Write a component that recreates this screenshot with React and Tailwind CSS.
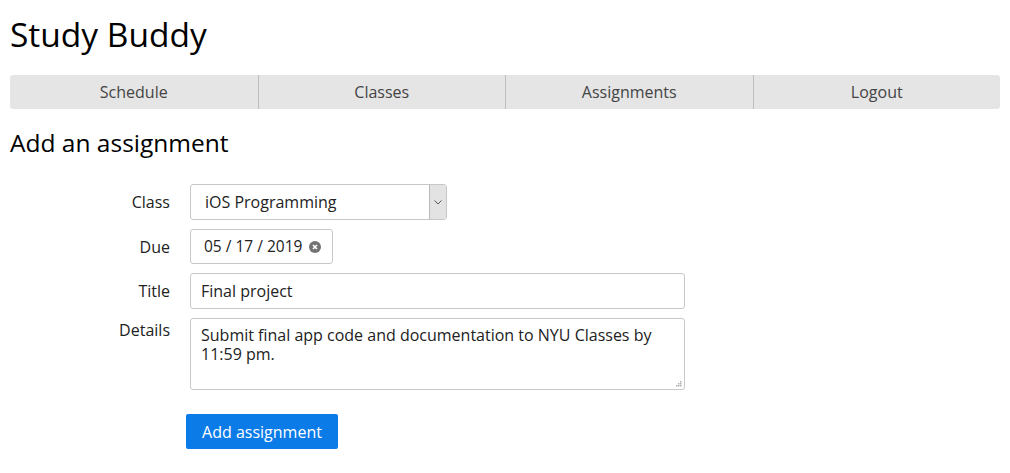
import { useState } from 'react'

const FONT = { fontFamily: '"Open Sans", Lato, "Liberation Sans", sans-serif' }

const NAV = ['Schedule', 'Classes', 'Assignments', 'Logout']

function Row({ label, children, top }) {
  return (
    <div className="flex">
      <div className={`w-[180px] pr-[20px] flex justify-end text-[16px] text-[#222] ${top ? 'items-start' : 'items-center'}`}>
        {label}
      </div>
      {children}
    </div>
  )
}

export default function App() {
  const [title, setTitle] = useState('Final project')
  const [details, setDetails] = useState('Submit final app code and documentation to NYU Classes by 11:59 pm.')

  return (
    <div className="bg-white min-h-[473px] px-[10px] pt-[14px]" style={FONT}>
      <h1 className="text-[33.5px] leading-[40px] text-black">Study Buddy</h1>

      <nav className="mt-[21px] grid grid-cols-4 rounded-[3px] bg-[#e5e5e5] h-[34px]">
        {NAV.map((n, i) => (
          <div
            key={n}
            className={`flex items-center justify-center text-[16px] text-[#444] ${i > 0 ? 'border-l border-[#bdbdbd]' : ''}`}
          >
            {n}
          </div>
        ))}
      </nav>

      <h2 className="mt-[19px] text-[24.5px] leading-[30px] text-black">Add an assignment</h2>

      <form className="mt-[26px] flex flex-col gap-[9px]" onSubmit={e => e.preventDefault()}>
        <Row label="Class">
          <div className="flex h-[36px] w-[257px] rounded-[3px] border border-[#c8c8c8] bg-white">
            <div className="flex-1 flex items-center pl-[14px] text-[16px] text-[#222]">iOS Programming</div>
            <div className="w-[17px] flex items-center justify-center border-l border-[#b8b8b8] bg-[#e3e3e3] rounded-r-[2px]">
              <svg width="8" height="5" viewBox="0 0 8 5">
                <path d="M0.5 0.5 L4 4 L7.5 0.5" fill="none" stroke="#555" strokeWidth="1" />
              </svg>
            </div>
          </div>
        </Row>

        <Row label="Due">
          <div className="flex h-[35px] w-[143px] items-center gap-[7px] rounded-[3px] border border-[#c8c8c8] pl-[13px] text-[15.5px] text-[#222]">
            <span>05 / 17 / 2019</span>
            <svg width="12" height="12" viewBox="0 0 12 12">
              <circle cx="6" cy="6" r="6" fill="#737373" />
              <path d="M4 4 L8 8 M8 4 L4 8" stroke="#fff" strokeWidth="1.6" />
            </svg>
          </div>
        </Row>

        <Row label="Title">
          <input
            value={title}
            onChange={e => setTitle(e.target.value)}
            className="h-[36px] w-[495px] rounded-[3px] border border-[#c8c8c8] px-[10px] text-[16px] text-[#222] outline-none"
            style={FONT}
          />
        </Row>

        <Row label="Details" top>
          <div className="relative">
            <textarea
              value={details}
              onChange={e => setDetails(e.target.value)}
              className="block h-[72px] w-[495px] resize-none rounded-[3px] border border-[#c8c8c8] px-[10px] py-[7px] text-[16px] leading-[19px] text-[#222] outline-none"
              style={FONT}
            />
            <svg className="absolute right-[3px] bottom-[3px]" width="7" height="7" viewBox="0 0 7 7">
              <rect x="5" y="1" width="1.5" height="1.5" fill="#b0b0b0" />
              <rect x="3" y="3" width="1.5" height="1.5" fill="#b0b0b0" />
              <rect x="5" y="3" width="1.5" height="1.5" fill="#b0b0b0" />
              <rect x="1" y="5" width="1.5" height="1.5" fill="#b0b0b0" />
              <rect x="3" y="5" width="1.5" height="1.5" fill="#b0b0b0" />
              <rect x="5" y="5" width="1.5" height="1.5" fill="#b0b0b0" />
            </svg>
          </div>
        </Row>

        <div className="pl-[176px] pt-[15px]">
          <button
            type="submit"
            className="h-[35px] w-[152px] rounded-[2px] bg-[#0b7be8] text-[16px] text-white"
            style={FONT}
          >
            Add assignment
          </button>
        </div>
      </form>
    </div>
  )
}
